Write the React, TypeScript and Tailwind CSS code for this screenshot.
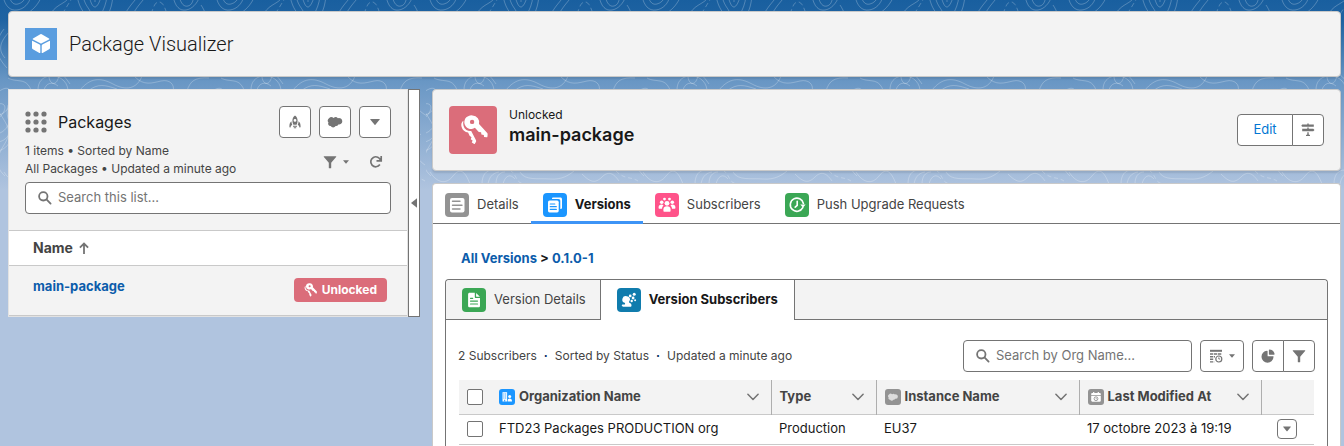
import type { ReactNode } from "react";

type IconProps = { className?: string };

function Topography() {
  return (
    <svg aria-hidden="true" className="absolute inset-x-0 top-0 -z-10 h-60 w-full">
      <defs>
        <pattern id="topo" width="213" height="240" patternUnits="userSpaceOnUse">
          <g fill="none" stroke="#ffffff" strokeWidth="1" strokeOpacity="0.24">
            <path d="M3-4C5 6 10 11 17 10S29 4 31-4M9-4c2 7 5 9 9 8s7-4 8-8M42-4C38 4 35 8 28 13M51 13C58 3 66 4 70-4" />
            <path d="M77-4c2 10 5 14 8 18M83-4c2 9 5 11 7 15M89-4c2 8 4 11 6 11s5-5 6-11M95-4v6M107-4c-1 8-3 13-6 18M113-4c-1 8-2 13-5 18" />
            <path d="M125 14c5-9 9-12 13-18M133 14c5-9 9-12 13-18M173-4c2 11 7 15 13 14s11-6 14-14M179-4c2 8 5 11 9 10s5-5 6-10" />
            <path d="M62 14c5-7 7-12 12-18M151 14c3-8 4-12 8-12s6 6 8 12" strokeDasharray="5 3" />
            <path d="M9 32C1 41-3 49 5 58M4 29C-7 43-5 55 7 68M209 24c7 9 4 20-3 26s-7 13 1 20M201 5c9 13 4 22-2 32" />
            <path d="M38 90c0-8 4-13 12-14s17 4 18 14M44 90c2-7 8-9 14-4M49 76c0 7 6 11 9 3s7-2 12 5" />
            <path d="M8 78c9 5 18-1 23 12M80 90c10-12 20-13 33-6s24 5 29-8M88 91c10-8 17-6 29-2M135 77c9 9 17 6 26 4s14 4 12 10M187 91c3-10 8-14 22-13" />
            <path d="M-2 92c11-8 14-2 13 8s-8 14-14 16M-2 104c8-2 10 5 1 14M-3 134c8-2 12-8 13-16M-2 142c8-1 13-8 13-16M-2 151c8-2 13-8 13-16M203 91c-2 17 3 20 11 25" />
            <path d="M4 172c7 11 16 13 23 4s12-5 17 8M56 184c0-9 4-14 11-14M62 184c1-6 4-11 11-12M70 184c0-7 3-12 9-12M77 184c2-8 7-11 12-5M94 172c5 9 18 6 30 7s19-4 24-8M156 174c8 8 13 10 20 3s12-3 17 4" />
            <path d="M84 170c8 6 5 13 15 14M190 171c9 9 14 5 22 10" strokeDasharray="4 3" />
            <path d="M-1 112c8 13 14 19 5 33s-8 23 1 31M8 105c-4 15 6 17 1 30M208 134c-12 9-8 23 4 31" />
          </g>
        </pattern>
      </defs>
      <rect width="100%" height="100%" fill="url(#topo)" />
    </svg>
  );
}

function CubeIcon({ className }: IconProps) {
  return (
    <svg viewBox="0 0 32 32" className={className} fill="#fff" aria-hidden="true">
      <path d="M15.3 6.3a1.5 1.5 0 0 1 1.4 0l7.3 4.1c.5.3.5.7 0 1l-7.3 3.8a1.5 1.5 0 0 1-1.4 0L8 11.400c-.5-.3-.5-.7 0-1zM7.800 13l6.800 3.600q.7.400.700 1.100v6.700c0 .6-.4.800-.9.500l-6.500-3.700a1.700 1.700 0 0 1-.9-1.500v-6.200c0-.6.3-.8.800-.5zM24.200 13l-6.800 3.600q-.7.400-.700 1.100v6.700c0 .6.400.8.900.5l6.500-3.700a1.700 1.700 0 0 0 .9-1.500v-6.200c0-.6-.3-.8-.8-.5z" />
    </svg>
  );
}

function GridDots({ className }: IconProps) {
  return (
    <svg viewBox="0 0 22 22" className={className} fill="#747474" aria-hidden="true">
      {[3, 11, 19].map((y) => [3, 11, 19].map((x) => <circle key={`${x}-${y}`} cx={x} cy={y} r="2.6" />))}
    </svg>
  );
}

function RocketIcon({ className }: IconProps) {
  return (
    <svg viewBox="0 0 14 14" className={className} fill="#747474" aria-hidden="true">
      <path fillRule="evenodd" d="M7 .5C8.800 1.900 9.600 3.700 9.600 5.700c0 1.600-.4 2.900-1 4.100H5.400c-.6-1.200-1-2.500-1-4.100C4.400 3.700 5.200 1.900 7 .5zm0 3.500a1.400 1.400 0 1 0 0 2.800A1.400 1.400 0 0 0 7 4z" />
      <path d="M3.400 6.300c.1 1.500.4 2.700.9 3.800-1 .3-1.500 1-1.800 2.400-.8.1-1.100-.3-1.100-1.100 0-2.400.6-4 2-5.100zM10.600 6.300c-.1 1.500-.4 2.700-.9 3.800 1 .3 1.500 1 1.800 2.400.8.1 1.100-.3 1.100-1.100 0-2.400-.6-4-2-5.100zM5 10.800h4v.9H5zM5.800 12.300h2.400v1H5.800z" />
    </svg>
  );
}

function CloudIcon({ className }: IconProps) {
  return (
    <svg viewBox="0 0 16 12" className={className} fill="currentColor" aria-hidden="true">
      <path d="M6.600 2a3 3 0 0 1 4.300.2 3.300 3.300 0 0 1 4.400 3.100 3.300 3.300 0 0 1-4 3.200A2.500 2.500 0 0 1 8.600 10a2.800 2.800 0 0 1-4.900.1A2.300 2.300 0 0 1 1.500 6.600 2.900 2.900 0 0 1 2 2.200 3.200 3.200 0 0 1 6.600 2z" />
    </svg>
  );
}

function Caret({ className }: IconProps) {
  return (
    <svg viewBox="0 0 10 6" className={className} fill="#747474" aria-hidden="true">
      <path d="M.5 0h9q.5.2.2.6L5.400 5.700q-.4.400-.8 0L.300.600Q0 .2.500 0z" />
    </svg>
  );
}

function FunnelIcon({ className }: IconProps) {
  return (
    <svg viewBox="0 0 14 14" className={className} fill="#747474" aria-hidden="true">
      <path d="M1.200 1.200h11.600c.5 0 .6.400.3.800L8.200 7.700v5c0 .4-.2.600-.6.600H6.400c-.4 0-.6-.2-.6-.6v-5L.900 2c-.3-.4-.2-.8.300-.8z" />
    </svg>
  );
}

function RefreshIcon({ className }: IconProps) {
  return (
    <svg viewBox="0 0 14 14" className={className} fill="none" stroke="#747474" strokeWidth="1.700" aria-hidden="true">
      <path d="M10.900 9.600A5 5 0 1 1 11.600 5.500M12.200.9v4.900H7.500" />
    </svg>
  );
}

function SearchIcon({ className }: IconProps) {
  return (
    <svg viewBox="0 0 14 14" className={className} fill="none" stroke="#747474" strokeWidth="1.800" strokeLinecap="round" aria-hidden="true">
      <circle cx="5.300" cy="5.300" r="4.200" />
      <path d="M8.700 8.700l3.900 3.900" />
    </svg>
  );
}

function KeysIcon({ className, viewBox = "0 0 48 48" }: IconProps & { viewBox?: string }) {
  return (
    <svg viewBox={viewBox} className={className} fill="#fff" aria-hidden="true">
      <path fillRule="evenodd" d="M23.500 9.500a6.800 6.800 0 0 1 6.500 8.600l8 8.700c.7.700.7 1.400.6 2.200l-.2 1.700c-.1.500-.3.700-.8.600l-2.500-.2-.3-2.100-2.400-.4-.3-2.300-2.300-.4-3.900-4.100a6.800 6.800 0 1 1-2.400-12.300zm-.4 4.200a2.200 2.200 0 1 0 0 4.400 2.200 2.200 0 0 0 0-4.400z" />
      <path d="M14.400 14.800c-.7 3.800.1 7.300 3 9.200 1.600 1 3.100 1.200 4.800 1l4.800 9.200c.3.600.2 1.200-.1 1.700l-.9 1.500c-.3.600-.7.600-1.200.3l-2-1.200.8-2-1.900-1.300.8-2-1.900-1.400-1.500-3.200c-3.100-.5-5.600-2.300-6.500-5.500-.8-2.900 0-5.200 1.800-6.300z" />
    </svg>
  );
}

function SignIcon({ className }: IconProps) {
  return (
    <svg viewBox="0 0 14 14" className={className} fill="#747474" aria-hidden="true">
      <path d="M6.300.5h1.400v1.100h5.100v2.200H1.200l-.9-1.100.9-1.100h5.100zM6.300 4.500h1.400v1.300h4.600l1.200 1.200-1.200 1.200H1.200V5.800h5.100zM6.300 9.200h1.400v2.300l1.300.6v1H5v-1l1.300-.6z" />
    </svg>
  );
}

function Tile({ color, children }: { color: string; children: ReactNode }) {
  return (
    <span className={`flex size-6 shrink-0 items-center justify-center rounded ${color}`}>
      <svg viewBox="0 0 24 24" className="size-6" fill="#fff" aria-hidden="true">
        {children}
      </svg>
    </span>
  );
}

function DetailsTile() {
  return (
    <Tile color="bg-[#939393]">
      <rect x="5" y="5" width="14.500" height="14.500" rx="2" />
      <path d="M7.500 8.300H15M7.500 12.200H17M7.500 16H15" stroke="#939393" strokeWidth="1.400" strokeLinecap="round" />
    </Tile>
  );
}

function VersionsTile() {
  return (
    <Tile color="bg-[#1b96ff]">
      <path d="M9 6c0-.9.500-1.400 1.300-1.400h7c1.100 0 1.700.600 1.700 1.700v8.400c0 .8-.5 1.200-1.200 1.200h-.5V8c0-1.200-.7-1.900-1.900-1.900z" />
      <rect x="5" y="7.600" width="10.700" height="11.800" rx="1.600" />
      <path d="M7.300 11h4.500M7.300 13.700h6M7.300 16.400h6" stroke="#1b96ff" strokeWidth="1.200" strokeLinecap="round" />
    </Tile>
  );
}

function SubscribersTile() {
  return (
    <Tile color="bg-[#ff538a]">
      <circle cx="9.500" cy="6.100" r="1.400" />
      <circle cx="14.500" cy="6.100" r="1.400" />
      <circle cx="6.700" cy="9.300" r="1.800" />
      <circle cx="17.300" cy="9.300" r="1.800" />
      <circle cx="12" cy="10.300" r="2.400" />
      <path d="M3.600 14.300c0-1.800 1.300-2.700 2.900-2.700.9 0 1.500.3 2 .8-1 .8-1.500 2-1.500 3.400H4.300c-.5 0-.7-.3-.7-.7zM20.400 14.300c0-1.800-1.300-2.700-2.900-2.700-.9 0-1.500.3-2 .8 1 .8 1.500 2 1.500 3.400h2.700c.5 0 .7-.3.7-.7zM8.400 16.200c0-1.900 1.500-3 3.600-3s3.600 1.100 3.600 3v1.600c0 .7-.4 1-1 1H9.400c-.6 0-1-.3-1-1z" />
    </Tile>
  );
}

function PushTile() {
  return (
    <Tile color="bg-[#3ba755]">
      <path d="M17.800 14.700A6.600 6.600 0 1 1 18.400 10.500M12.200 8.300v4l-2 1.800" fill="none" stroke="#fff" strokeWidth="1.600" strokeLinecap="round" />
      <path d="M15.300 11.400h5.300L18 14.800z" />
    </Tile>
  );
}

function DocumentTile() {
  return (
    <Tile color="bg-[#3ba755]">
      <path d="M7.700 4.800h5.100v4.100c0 .8.4 1.200 1.200 1.200H18v7.600c0 1-.6 1.600-1.600 1.600H7.700c-1 0-1.600-.6-1.600-1.600V6.400c0-1 .6-1.600 1.600-1.600zM14.100 4.900 17.900 8.800h-3.200c-.4 0-.6-.2-.6-.6z" />
      <path d="M8.500 10.300h2.200M8.500 13.100h7M8.500 16h7" stroke="#3ba755" strokeWidth="1.200" strokeLinecap="round" />
    </Tile>
  );
}

function PeopleTile() {
  return (
    <Tile color="bg-[#107cad]">
      <path d="M9.900 8.200a3.100 3.100 0 0 1 2.400 5.100c-.4.600-.5 1.200.2 1.500 1.300.6 2 1.200 2 2.700 0 .9-.4 1.300-1.200 1.300H6c-.8 0-1.200-.4-1.200-1.200 0-.7.400-1 1.200-1.100h1.800c.5-.4.400-1.100-.100-1.700a3.200 3.200 0 0 1 2.200-6.600z" />
      <circle cx="13.200" cy="7.900" r="1.400" />
      <circle cx="17.200" cy="6.300" r="1.500" />
      <circle cx="16.100" cy="10" r="1.400" />
      <circle cx="14.700" cy="13" r="1.200" />
      <circle cx="18.100" cy="12.200" r="1" />
    </Tile>
  );
}

function OrgMini() {
  return (
    <svg viewBox="0 0 16 16" className="size-4 shrink-0" aria-hidden="true">
      <rect width="16" height="16" rx="3" fill="#1b96ff" />
      <path d="M3.500 3.200h4.600v9.300H3.500z" fill="#fff" />
      <path d="M4.400 4.500h1v1h-1zM6.200 4.500h1v1h-1zM4.400 6.500h1v1h-1zM6.200 6.500h1v1h-1zM4.400 8.500h1v1h-1zM6.200 8.500h1v1h-1zM5.200 10.700h1v1.800h-1z" fill="#1b96ff" />
      <circle cx="10.700" cy="7.600" r="1.500" fill="#fff" />
      <path d="M8.700 12.500c-.3-2 .6-2.900 2-2.900s2.300.9 2.300 2.900z" fill="#fff" />
    </svg>
  );
}

function CloudMini() {
  return (
    <span className="flex size-4 shrink-0 items-center justify-center rounded-[3px] bg-[#939393] text-[#dddddd]">
      <CloudIcon className="h-2 w-3" />
    </span>
  );
}

function DateMini() {
  return (
    <svg viewBox="0 0 16 16" className="size-4 shrink-0" aria-hidden="true">
      <rect width="16" height="16" rx="3" fill="#939393" />
      <path d="M3.200 5.200c0-.8.400-1.200 1.200-1.200h.7V3h1.200v1h3.400V3h1.200v1h.7c.8 0 1.200.4 1.200 1.200v.7H3.200zM3.200 6.700h9.600v4.900c0 .8-.4 1.200-1.200 1.200H4.400c-.8 0-1.200-.4-1.200-1.200z" fill="#fff" />
      <circle cx="8" cy="9.700" r="1.900" fill="none" stroke="#939393" strokeWidth=".9" />
      <path d="M8 8.700v1.100h.9" fill="none" stroke="#939393" strokeWidth=".6" />
    </svg>
  );
}

function ChevronDown() {
  return (
    <svg viewBox="0 0 12 8" className="h-2 w-3" fill="none" stroke="#747474" strokeWidth="1.500" strokeLinecap="round" strokeLinejoin="round" aria-hidden="true">
      <path d="M.9 1.200 6 6.500l5.100-5.300" />
    </svg>
  );
}

function ColumnsIcon() {
  return (
    <svg viewBox="0 0 14 14" className="size-3.5" fill="none" stroke="#747474" aria-hidden="true">
      <path d="M1 1.800h12" strokeWidth="2" />
      <path d="M1 5h12M1 7.700h5M1 10.300h3.900M1 12.900h4.200" strokeWidth="1.400" strokeDasharray="3.200 .7" />
      <circle cx="9.800" cy="10" r="3" strokeWidth="1.200" />
      <path d="M9.800 8.400V10h1.300" strokeWidth=".9" />
    </svg>
  );
}

function PieIcon() {
  return (
    <svg viewBox="0 0 14 14" className="size-3.5" fill="#747474" aria-hidden="true">
      <path d="M6 1.700c.4 0 .6.200.6.600v5h5.400c.4 0 .6.200.5.600A6 6 0 1 1 6 1.700z" />
      <path d="M8.500.4c2.800.2 4.800 2.100 5.100 4.700 0 .4-.2.600-.6.600H8.500c-.4 0-.6-.2-.6-.6V1c0-.4.2-.6.600-.6z" />
    </svg>
  );
}

const outline = "flex items-center justify-center border border-[#747474] bg-white";

function SideList() {
  return (
    <aside className="flex w-103 shrink-0 self-start">
      <section className="min-w-0 flex-1 border border-[#e2e2e2] bg-[#f3f3f3]">
        <div className="border-b border-[#c9c9c9] p-4">
          <div className="flex items-center">
            <GridDots className="size-5.5" />
            <h2 className="ml-[11px] flex-1 text-base leading-8 text-[#181818]">Packages</h2>
            <div className="flex gap-2">
              <button aria-label="Launch" className={`${outline} size-8 rounded`}><RocketIcon className="size-3.5" /></button>
              <button aria-label="Org" className={`${outline} size-8 rounded text-[#747474]`}><CloudIcon className="h-3 w-4" /></button>
              <button aria-label="More actions" className={`${outline} size-8 rounded`}><Caret className="h-1.5 w-2.5" /></button>
            </div>
          </div>
          <div className="mt-1 flex items-center">
            <div className="flex-1 text-xs leading-[18px] text-[#444444]">
              <p>1 items • Sorted by Name</p>
              <p>All Packages • Updated a minute ago</p>
            </div>
            <div className="flex items-center gap-5 pt-1 pr-2">
              <button aria-label="Filter" className="flex items-center gap-1.5"><FunnelIcon className="size-3.5" /><Caret className="h-1 w-1.5" /></button>
              <button aria-label="Refresh"><RefreshIcon className="size-3.5" /></button>
            </div>
          </div>
          <label className="mt-1 flex h-8 items-center gap-1.5 rounded border border-[#747474] bg-white px-3">
            <SearchIcon className="size-3.5 shrink-0" />
            <input type="search" aria-label="Search this list" placeholder="Search this list..." className="min-w-0 flex-1 bg-transparent text-[13px] outline-none placeholder:text-[#747474]" />
          </label>
        </div>
        <table className="w-full text-left text-[13px]">
          <thead className="bg-white text-[#444444]">
            <tr className="border-b border-[#c9c9c9]">
              <th colSpan={2} className="h-[34px] px-6 font-bold">
                <span className="flex items-center gap-1.5 text-sm">Name
                  <svg viewBox="0 0 10 12" className="h-3 w-2.5" fill="none" stroke="#747474" strokeWidth="1.800" aria-hidden="true"><path d="M5 12V1.500M.9 5.600 5 1.500l4.100 4.100" /></svg>
                </span>
              </th>
            </tr>
          </thead>
          <tbody>
            <tr className="border-b border-[#c9c9c9]">
              <td className="h-[50px] pb-1.5 pl-6"><a href="#main-package" className="font-bold text-[#0b5cab]">main-package</a></td>
              <td className="pr-5">
                <span className="ml-auto flex h-6 w-fit items-center gap-1 rounded bg-[#db6d7a] px-2.5 text-xs font-bold text-white">
                  <KeysIcon viewBox="11 9 30 30" className="size-3.5" />Unlocked
                </span>
              </td>
            </tr>
          </tbody>
        </table>
      </section>
      <button aria-label="Collapse list" className="flex w-3 items-center justify-center border border-[#747474] bg-white">
        <svg viewBox="0 0 6 10" className="h-2.5 w-1.5" fill="#747474" aria-hidden="true"><path d="M6 .3v9.400L0 5z" /></svg>
      </button>
    </aside>
  );
}

const tabs = [
  { label: "Details", icon: <DetailsTile />, active: false },
  { label: "Versions", icon: <VersionsTile />, active: true },
  { label: "Subscribers", icon: <SubscribersTile />, active: false },
  { label: "Push Upgrade Requests", icon: <PushTile />, active: false },
];

const columns = [
  { label: "Organization Name", icon: <OrgMini /> },
  { label: "Type", icon: null },
  { label: "Instance Name", icon: <CloudMini /> },
  { label: "Last Modified At", icon: <DateMini /> },
];

function SubscribersTable() {
  return (
    <table className="w-full table-fixed text-left text-[13px] text-[#181818]">
      <colgroup>
        <col className="w-8" />
        <col />
        <col className="w-[105px]" />
        <col className="w-[203px]" />
        <col className="w-[182px]" />
        <col className="w-[53px]" />
      </colgroup>
      <thead className="bg-[#f3f3f3] text-[#444444]">
        <tr className="border-b border-[#c9c9c9]">
          <th className="h-[34px] pl-2"><input type="checkbox" aria-label="Select all" className="block size-4 appearance-none rounded-[2px] border border-[#747474] bg-white" /></th>
          {columns.map((c) => (
            <th key={c.label} className="border-r border-[#aeaeae] px-2 font-bold">
              <div className="flex items-center gap-1">
                {c.icon}
                <span className="flex-1 whitespace-nowrap">{c.label}</span>
                <button aria-label={`${c.label} menu`} className="mr-1"><ChevronDown /></button>
              </div>
            </th>
          ))}
          <th aria-label="Actions" />
        </tr>
      </thead>
      <tbody>
        <tr className="border-b border-[#c9c9c9]">
          <td className="h-[30px] pl-2"><input type="checkbox" aria-label="Select FTD23 Packages PRODUCTION org" className="block size-4 appearance-none rounded-[2px] border border-[#747474] bg-white" /></td>
          <td className="px-2">FTD23 Packages PRODUCTION org</td>
          <td className="px-2">Production</td>
          <td className="px-2">EU37</td>
          <td className="px-2 whitespace-nowrap">17 octobre 2023 à 19:19</td>
          <td className="px-4"><button aria-label="Row actions" className={`${outline} size-5 rounded`}><Caret className="h-1.5 w-2" /></button></td>
        </tr>
      </tbody>
    </table>
  );
}

export default function App() {
  return (
    <main className="relative isolate flex min-h-screen flex-col gap-3 bg-[#b0c4df] bg-[linear-gradient(180deg,#195f9f_0,#1f63a2_20px,#6896c4_80px,#b0c4df_190px)] pt-[11px] pr-[3px] pl-2 font-[Inter,'Liberation_Sans',sans-serif] text-[13px] text-[#181818]">
      <Topography />
      <header className="flex items-center gap-3 rounded border border-[#c9c9c9] bg-[#f3f3f3] p-4 shadow-[0_2px_2px_rgba(0,0,0,0.1)]">
        <span className="bg-[#5a9ddf]"><CubeIcon className="size-8" /></span>
        <h1 className="font-[Roboto,Inter,sans-serif] text-xl leading-8 font-light">Package Visualizer</h1>
      </header>

      <div className="flex flex-1 gap-3">
        <SideList />
        <div className="flex min-w-0 flex-1 flex-col gap-3">
          <section className="flex items-center gap-3 rounded border border-[#c9c9c9] bg-[#f3f3f3] p-4 shadow-[0_2px_2px_rgba(0,0,0,0.1)]">
            <span className="rounded bg-[#db6d7a]"><KeysIcon className="size-12" /></span>
            <div className="flex-1 pb-2">
              <p className="text-xs leading-[18px]">Unlocked</p>
              <h2 className="text-lg leading-[22px] font-semibold">main-package</h2>
            </div>
            <div className="flex">
              <button className={`${outline} h-8 w-14 rounded-l text-[#0176d3]`}>Edit</button>
              <button aria-label="Path" className={`${outline} -ml-px h-8 w-8 rounded-r`}><SignIcon className="size-3.5" /></button>
            </div>
          </section>

          <section className="flex flex-1 flex-col rounded-t border border-b-0 border-[#c9c9c9] bg-white">
            <nav className="flex border-b border-[#747474] text-[#444444]">
              {tabs.map((t) => (
                <button
                  key={t.label}
                  className={
                    t.active
                      ? "-mb-px flex h-10 items-center gap-2 border-b-3 border-[#3d94f6] px-3 pt-1 font-bold text-[#181818]"
                      : "flex h-[39px] items-center gap-2 px-3 pt-0.5"
                  }
                >
                  {t.icon}
                  {t.label}
                </button>
              ))}
            </nav>
            <p className="px-7 pt-6 pb-[11px] leading-5 font-bold">
              <a href="#versions" className="text-[#0b5cab]">All Versions</a> {">"} <a href="#version" className="text-[#0b5cab]">0.1.0-1</a>
            </p>
            <div className="mx-3 flex flex-1 flex-col rounded-t border border-b-0 border-[#747474]">
              <div className="flex h-10 rounded-t bg-[#f3f3f3]">
                <button className="flex items-center gap-2 border-r border-b border-[#747474] pr-3.5 pl-4 text-[#444444]"><DocumentTile />Version Details</button>
                <button className="flex items-center gap-2 bg-white px-4 font-bold"><PeopleTile />Version Subscribers</button>
                <span className="flex-1 border-b border-l border-[#747474]" />
              </div>
              <div className="px-3 pt-5">
                <div className="flex items-center">
                  <p className="flex flex-1 gap-[7px] text-xs text-[#444444]">
                    <span>2 Subscribers</span><span className="font-bold text-[#032d60]">·</span>
                    <span>Sorted by Status</span><span className="font-bold text-[#032d60]">·</span>
                    <span>Updated a minute ago</span>
                  </p>
                  <label className="flex h-8 w-[229px] items-center gap-1.5 rounded border border-[#747474] px-3">
                    <SearchIcon className="size-3.5 shrink-0" />
                    <input type="search" aria-label="Search by Org Name" placeholder="Search by Org Name..." className="min-w-0 flex-1 bg-transparent outline-none placeholder:text-[#747474]" />
                  </label>
                  <button aria-label="Columns" className={`${outline} ml-2 h-8 w-11 gap-1.5 rounded`}><ColumnsIcon /><Caret className="h-1 w-1.5" /></button>
                  <button aria-label="Chart" className={`${outline} ml-2 size-8 rounded-l`}><PieIcon /></button>
                  <button aria-label="Filters" className={`${outline} -ml-px size-8 rounded-r`}><FunnelIcon className="size-3.5" /></button>
                </div>
                <div className="mt-2 px-px"><SubscribersTable /></div>
              </div>
            </div>
          </section>
        </div>
      </div>
    </main>
  );
}
